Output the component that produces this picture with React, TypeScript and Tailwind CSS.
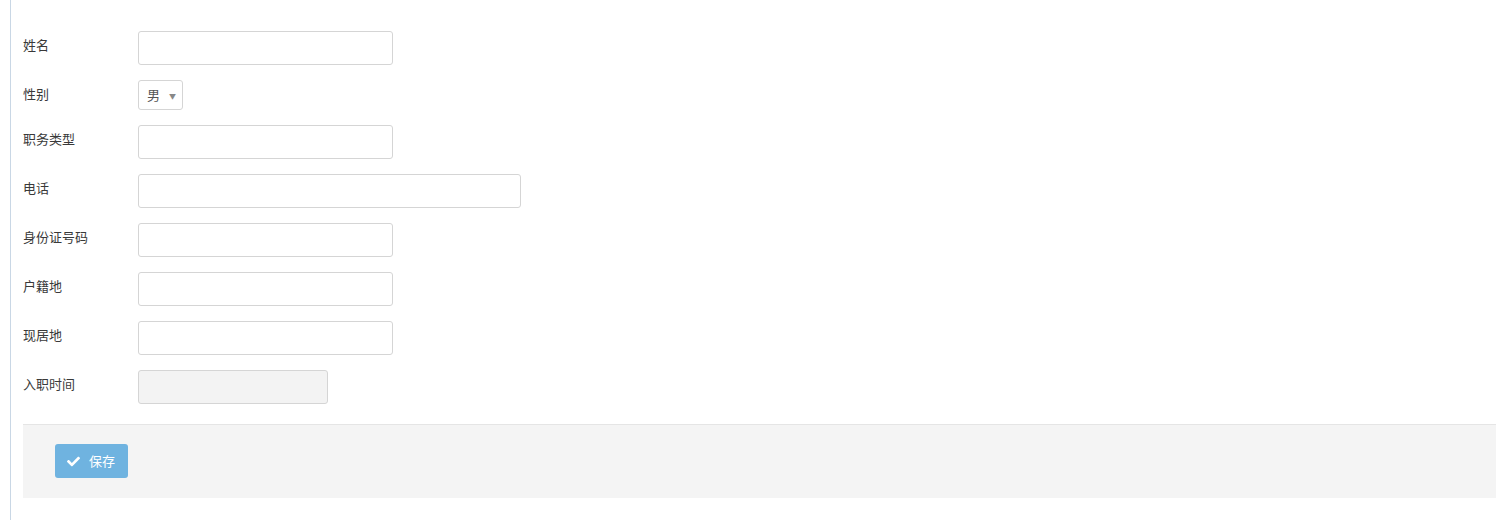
import { FaCheck } from 'react-icons/fa';

// 员工信息表单：左侧标签 + 右侧输入框，底部保存栏
const font = { fontFamily: '"Microsoft YaHei", "Noto Sans CJK SC", "Liberation Sans", sans-serif' };

function Row({ label, children }: { label: string; children: React.ReactNode }) {
  return (
    <div className="flex items-start mb-[15px]">
      <label className="w-[115px] shrink-0 pt-[4px] text-[13px] leading-[20px] text-[#393939]">{label}</label>
      {children}
    </div>
  );
}

const inputCls =
  'h-[34px] border border-[#d5d5d5] rounded-[3px] px-2 text-[13px] text-[#555] outline-none';

export default function App() {
  return (
    <div className="min-h-[520px] bg-white" style={font}>
      <div className="ml-[10px] min-h-[520px] border-l border-[#c9d7e5] pl-[12px] pt-[31px]">
        <Row label="姓名">
          <input className={`${inputCls} w-[255px] bg-white`} />
        </Row>
        <Row label="性别">
          <div className="relative flex h-[30px] w-[45px] items-center rounded-[3px] border border-[#d5d5d5] pl-[8px] text-[13px] text-[#555]">
            男
            <span className="absolute right-[6px] top-[10px] text-[7px] text-[#888]">▼</span>
          </div>
        </Row>
        <Row label="职务类型">
          <input className={`${inputCls} w-[255px] bg-white`} />
        </Row>
        <Row label="电话">
          <input className={`${inputCls} w-[383px] bg-white`} />
        </Row>
        <Row label="身份证号码">
          <input className={`${inputCls} w-[255px] bg-white`} />
        </Row>
        <Row label="户籍地">
          <input className={`${inputCls} w-[255px] bg-white`} />
        </Row>
        <Row label="现居地">
          <input className={`${inputCls} w-[255px] bg-white`} />
        </Row>
        <Row label="入职时间">
          <input disabled className={`${inputCls} w-[190px] bg-[#f3f3f3]`} />
        </Row>

        {/* 底部操作栏 */}
        <div className="mt-[20px] border-t border-[#e5e5e5] bg-[#f4f4f4] pt-[19px] pb-[20px] pl-[32px]">
          <button className="flex h-[34px] w-[73px] items-center gap-[9px] rounded-[3px] bg-[#6fb3e0] pl-[12px] text-[13px] text-white">
            <FaCheck className="h-[13px] w-[13px]" />
            保存
          </button>
        </div>
      </div>
    </div>
  );
}
